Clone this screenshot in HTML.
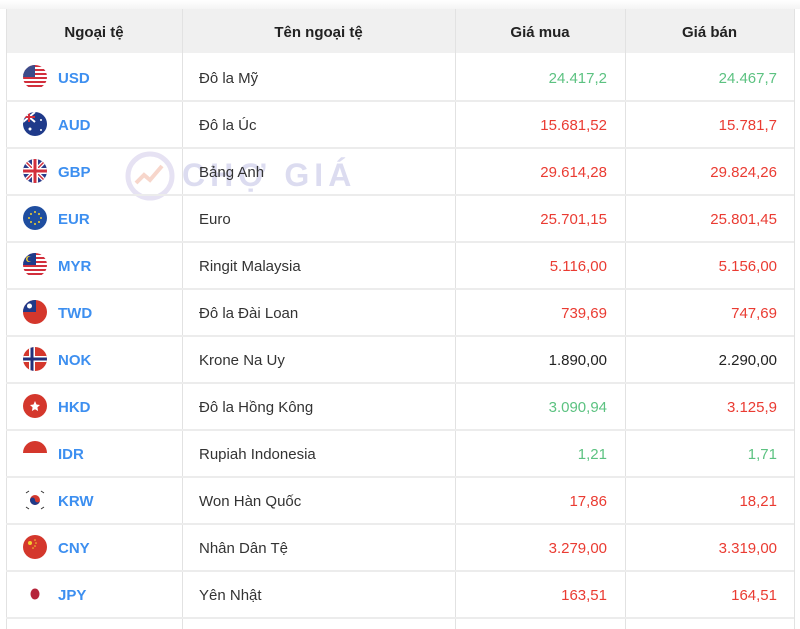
<!DOCTYPE html>
<html><head><meta charset="utf-8"><style>
*{margin:0;padding:0;box-sizing:border-box}
body{width:800px;height:627px;background:#fff;font-family:"Liberation Sans",sans-serif;position:relative;overflow:hidden}
.top{position:absolute;left:0;top:0;width:800px;height:9px;background:linear-gradient(#fff,#f4f4f4)}
.hdr{position:absolute;top:9px;left:6px;width:788px;height:44px;background:#f0f0f0}
.vl{position:absolute;top:9px;width:1px;height:620px;background:#e2e2e2}
.hl{position:absolute;left:6px;width:788px;height:2px;background:#ececec}
.t{position:absolute;font-size:15px;line-height:18px;white-space:nowrap;margin-top:2px}
.h{font-weight:bold;color:#222;text-align:center}
.c{left:58px;font-weight:bold;color:#3d8ff0}
.n{left:199px;color:#333}
.p1{right:193px;text-align:right}
.p2{right:23px;text-align:right}
.g{color:#5cc281}.r{color:#ea3b32}.k{color:#222}
svg.f{position:absolute;left:23px;width:24px;height:24px}
.wm{position:absolute;left:182px;top:157px;font-size:32px;font-weight:bold;color:#dcdcf0;letter-spacing:5px}
</style></head><body>
<div class="top"></div>
<div class="hdr"></div>
<div class="vl" style="left:6px"></div>
<div class="vl" style="left:182px"></div>
<div class="vl" style="left:455px"></div>
<div class="vl" style="left:625px"></div>
<div class="vl" style="left:794px"></div>
<svg style="position:absolute;left:122px;top:150px" width="60" height="52"><circle cx="28" cy="26" r="22" fill="none" stroke="#e6e2f3" stroke-width="5"/><path d="M14 33l8-8 6 5 12-14" stroke="#f7d6cb" stroke-width="4" fill="none"/></svg>
<div class="wm">CHỢ GIÁ</div>
<div class="t h" style="left:6px;width:176px;top:22px">Ngoại tệ</div>
<div class="t h" style="left:182px;width:273px;top:22px">Tên ngoại tệ</div>
<div class="t h" style="left:455px;width:170px;top:22px">Giá mua</div>
<div class="t h" style="left:625px;width:169px;top:22px">Giá bán</div>
<div class="hl" style="top:100px"></div><div class="hl" style="top:147px"></div><div class="hl" style="top:194px"></div><div class="hl" style="top:241px"></div><div class="hl" style="top:288px"></div><div class="hl" style="top:335px"></div><div class="hl" style="top:382px"></div><div class="hl" style="top:429px"></div><div class="hl" style="top:476px"></div><div class="hl" style="top:523px"></div><div class="hl" style="top:570px"></div><div class="hl" style="top:617px"></div>

<svg class="f" style="top:65px" viewBox="0 0 24 24"><defs><clipPath id="a"><circle cx="12" cy="12" r="12"/></clipPath></defs><g clip-path="url(#a)"><rect width="24" height="24" fill="#fff"/><g fill="#d22f3c"><rect y="0" width="24" height="2"/><rect y="4" width="24" height="2"/><rect y="8" width="24" height="2"/><rect y="12" width="24" height="2"/><rect y="16" width="24" height="2"/><rect y="20" width="24" height="2"/></g><rect width="12" height="12" fill="#3c4b8a"/></g></svg>
<svg class="f" style="top:112px" viewBox="0 0 24 24"><defs><clipPath id="b"><circle cx="12" cy="12" r="12"/></clipPath></defs><g clip-path="url(#b)"><rect width="24" height="24" fill="#1f3a8a"/><path d="M0 0L12 10M12 0L0 10" stroke="#fff" stroke-width="2"/><path d="M6 0V10M0 5H12" stroke="#d22f3c" stroke-width="2"/><circle cx="7" cy="17" r="1.5" fill="#fff"/><circle cx="18" cy="8" r="1" fill="#fff"/><circle cx="18" cy="18" r="1" fill="#fff"/></g></svg>
<svg class="f" style="top:159px" viewBox="0 0 24 24"><defs><clipPath id="c"><circle cx="12" cy="12" r="12"/></clipPath></defs><g clip-path="url(#c)"><rect width="24" height="24" fill="#2a3b8a"/><path d="M0 0L24 24M24 0L0 24" stroke="#fff" stroke-width="4"/><path d="M0 0L24 24M24 0L0 24" stroke="#d22f3c" stroke-width="1.5"/><path d="M12 0V24M0 12H24" stroke="#fff" stroke-width="6"/><path d="M12 0V24M0 12H24" stroke="#d22f3c" stroke-width="3"/></g></svg>
<svg class="f" style="top:206px" viewBox="0 0 24 24"><circle cx="12" cy="12" r="12" fill="#1f4ea0"/><g fill="#f3d02f"><circle cx="12" cy="6" r="1"/><circle cx="12" cy="18" r="1"/><circle cx="6" cy="12" r="1"/><circle cx="18" cy="12" r="1"/><circle cx="8" cy="8" r="1"/><circle cx="16" cy="8" r="1"/><circle cx="8" cy="16" r="1"/><circle cx="16" cy="16" r="1"/></g></svg>
<svg class="f" style="top:253px" viewBox="0 0 24 24"><defs><clipPath id="e"><circle cx="12" cy="12" r="12"/></clipPath></defs><g clip-path="url(#e)"><rect width="24" height="24" fill="#fff"/><g fill="#d22f3c"><rect y="0" width="24" height="2"/><rect y="4" width="24" height="2"/><rect y="8" width="24" height="2"/><rect y="12" width="24" height="2"/><rect y="16" width="24" height="2"/><rect y="20" width="24" height="2"/></g><rect width="13" height="12" fill="#1f3a8a"/><circle cx="6" cy="6" r="3" fill="#f3d02f"/><circle cx="7" cy="6" r="2.5" fill="#1f3a8a"/></g></svg>
<svg class="f" style="top:300px" viewBox="0 0 24 24"><defs><clipPath id="t"><circle cx="12" cy="12" r="12"/></clipPath></defs><g clip-path="url(#t)"><rect width="24" height="24" fill="#d4372c"/><rect width="13" height="12" fill="#1f3a8a"/><circle cx="6.5" cy="6" r="2.5" fill="#fff"/></g></svg>
<svg class="f" style="top:347px" viewBox="0 0 24 24"><defs><clipPath id="o"><circle cx="12" cy="12" r="12"/></clipPath></defs><g clip-path="url(#o)"><rect width="24" height="24" fill="#d4372c"/><path d="M9 0V24M0 12H24" stroke="#fff" stroke-width="6"/><path d="M9 0V24M0 12H24" stroke="#22307a" stroke-width="3"/></g></svg>
<svg class="f" style="top:394px" viewBox="0 0 24 24"><circle cx="12" cy="12" r="12" fill="#d4372c"/><path d="M12 7l1.5 3.5 3.5.5-2.6 2.4.7 3.6-3.1-1.8-3.1 1.8.7-3.6L7 11l3.5-.5z" fill="#fff"/></svg>
<svg class="f" style="top:441px" viewBox="0 0 24 24"><path d="M0 12A12 12 0 0 1 24 12Z" fill="#d4372c"/></svg>
<svg class="f" style="top:488px" viewBox="0 0 24 24"><circle cx="12" cy="12" r="5" fill="#d4372c"/><path d="M7 12a5 5 0 0 0 10 0a2.5 2.5 0 0 1-5 0a2.5 2.5 0 0 0-5 0z" fill="#1f3a8a"/><g stroke="#333" stroke-width="1"><path d="M3 5l3-2M3 19l3 2M18 3l3 2M18 21l3-2"/></g></svg>
<svg class="f" style="top:535px" viewBox="0 0 24 24"><circle cx="12" cy="12" r="12" fill="#d4372c"/><g fill="#f3d02f"><circle cx="7" cy="8" r="2"/><circle cx="12" cy="5" r=".8"/><circle cx="13" cy="8" r=".8"/><circle cx="12" cy="11" r=".8"/><circle cx="10" cy="13" r=".8"/></g></svg>
<svg class="f" style="top:582px" viewBox="0 0 24 24"><ellipse cx="12" cy="12" rx="4.5" ry="5.5" fill="#b5253a"/></svg>

<div class="t c" style="top:68px">USD</div><div class="t n" style="top:68px">Đô la Mỹ</div><div class="t p1 g" style="top:68px">24.417,2</div><div class="t p2 g" style="top:68px">24.467,7</div>
<div class="t c" style="top:115px">AUD</div><div class="t n" style="top:115px">Đô la Úc</div><div class="t p1 r" style="top:115px">15.681,52</div><div class="t p2 r" style="top:115px">15.781,7</div>
<div class="t c" style="top:162px">GBP</div><div class="t n" style="top:162px">Bảng Anh</div><div class="t p1 r" style="top:162px">29.614,28</div><div class="t p2 r" style="top:162px">29.824,26</div>
<div class="t c" style="top:209px">EUR</div><div class="t n" style="top:209px">Euro</div><div class="t p1 r" style="top:209px">25.701,15</div><div class="t p2 r" style="top:209px">25.801,45</div>
<div class="t c" style="top:256px">MYR</div><div class="t n" style="top:256px">Ringit Malaysia</div><div class="t p1 r" style="top:256px">5.116,00</div><div class="t p2 r" style="top:256px">5.156,00</div>
<div class="t c" style="top:303px">TWD</div><div class="t n" style="top:303px">Đô la Đài Loan</div><div class="t p1 r" style="top:303px">739,69</div><div class="t p2 r" style="top:303px">747,69</div>
<div class="t c" style="top:350px">NOK</div><div class="t n" style="top:350px">Krone Na Uy</div><div class="t p1 k" style="top:350px">1.890,00</div><div class="t p2 k" style="top:350px">2.290,00</div>
<div class="t c" style="top:397px">HKD</div><div class="t n" style="top:397px">Đô la Hồng Kông</div><div class="t p1 g" style="top:397px">3.090,94</div><div class="t p2 r" style="top:397px">3.125,9</div>
<div class="t c" style="top:444px">IDR</div><div class="t n" style="top:444px">Rupiah Indonesia</div><div class="t p1 g" style="top:444px">1,21</div><div class="t p2 g" style="top:444px">1,71</div>
<div class="t c" style="top:491px">KRW</div><div class="t n" style="top:491px">Won Hàn Quốc</div><div class="t p1 r" style="top:491px">17,86</div><div class="t p2 r" style="top:491px">18,21</div>
<div class="t c" style="top:538px">CNY</div><div class="t n" style="top:538px">Nhân Dân Tệ</div><div class="t p1 r" style="top:538px">3.279,00</div><div class="t p2 r" style="top:538px">3.319,00</div>
<div class="t c" style="top:585px">JPY</div><div class="t n" style="top:585px">Yên Nhật</div><div class="t p1 r" style="top:585px">163,51</div><div class="t p2 r" style="top:585px">164,51</div>
</body></html>
